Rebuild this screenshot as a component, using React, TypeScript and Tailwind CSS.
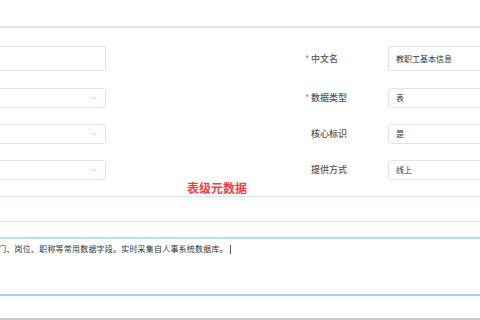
import { ChevronDown } from 'lucide-react';

const font = { fontFamily: '"Noto Sans CJK SC", "Noto Sans", sans-serif' };

function LeftSelect() {
  return (
    <div className="-ml-[40px] flex h-[20px] w-[146px] shrink-0 items-center justify-end rounded-[3px] border border-[#e4e4e4] pr-[6px]">
      <ChevronDown className="h-[10px] w-[10px] text-[#bcbcbc]" strokeWidth={1.75} />
    </div>
  );
}

function Label({ text, required }: { text: string; required?: boolean }) {
  return (
    <div className="relative ml-[205px] w-[77px] shrink-0 text-[9px] font-medium leading-[12px] text-[#555]">
      {required && <span className="absolute -left-[6px] top-0 text-[#f56c6c]">*</span>}
      {text}
    </div>
  );
}

function RightInput({ value, tall }: { value: string; tall?: boolean }) {
  return (
    <div
      className={`flex w-[110px] shrink-0 items-center border border-[#e4e4e4] pl-[7px] text-[8px] text-[#333] ${
        tall ? 'h-[25px] rounded-[2px]' : 'h-[20px] rounded-[3px]'
      }`}
    >
      {value}
    </div>
  );
}

export default function App() {
  return (
    <div className="h-[320px] w-[480px] overflow-hidden bg-white" style={font}>
      <div className="h-[26px]" />
      <div className="h-[2px] bg-[#e6e6e6]" />

      <div className="pt-[18px]">
        <div className="flex h-[25px] items-center">
          <div className="-ml-[40px] h-[25px] w-[146px] shrink-0 rounded-[2px] border border-[#e4e4e4]" />
          <Label text="中文名" required />
          <RightInput value="教职工基本信息" tall />
        </div>
        <div className="mt-[17px] flex h-[20px] items-center">
          <LeftSelect />
          <Label text="数据类型" required />
          <RightInput value="表" />
        </div>
        <div className="mt-[16px] flex h-[20px] items-center">
          <LeftSelect />
          <Label text="核心标识" />
          <RightInput value="是" />
        </div>
        <div className="mt-[16px] flex h-[20px] items-center">
          <LeftSelect />
          <Label text="提供方式" />
          <RightInput value="线上" />
        </div>
      </div>

      <div className="h-[16px] pl-[187px] pt-[1px] text-[12px] font-bold leading-[13px] text-[#ff3b3b]">
        表级元数据
      </div>

      <div className="h-[26px] border-y border-[#cfe4fb]" />
      <div className="h-[15px]" />

      <div className="h-[59px] border-y-2 border-t-[#b9dafb] border-b-[#a6d1fb]">
        <div className="-ml-[10px] flex items-center whitespace-nowrap pt-[4px] text-[8px] leading-[12px] tracking-[0.2px] text-[#333]">
          部门、岗位、职称等常用数据字段。实时采集自人事系统数据库。
          <span className="ml-[2px] inline-block h-[9px] w-px bg-[#555]" />
        </div>
      </div>

      <div className="h-[22px]" />
      <div className="h-[2px] bg-[#c8c8c8]" />
    </div>
  );
}
